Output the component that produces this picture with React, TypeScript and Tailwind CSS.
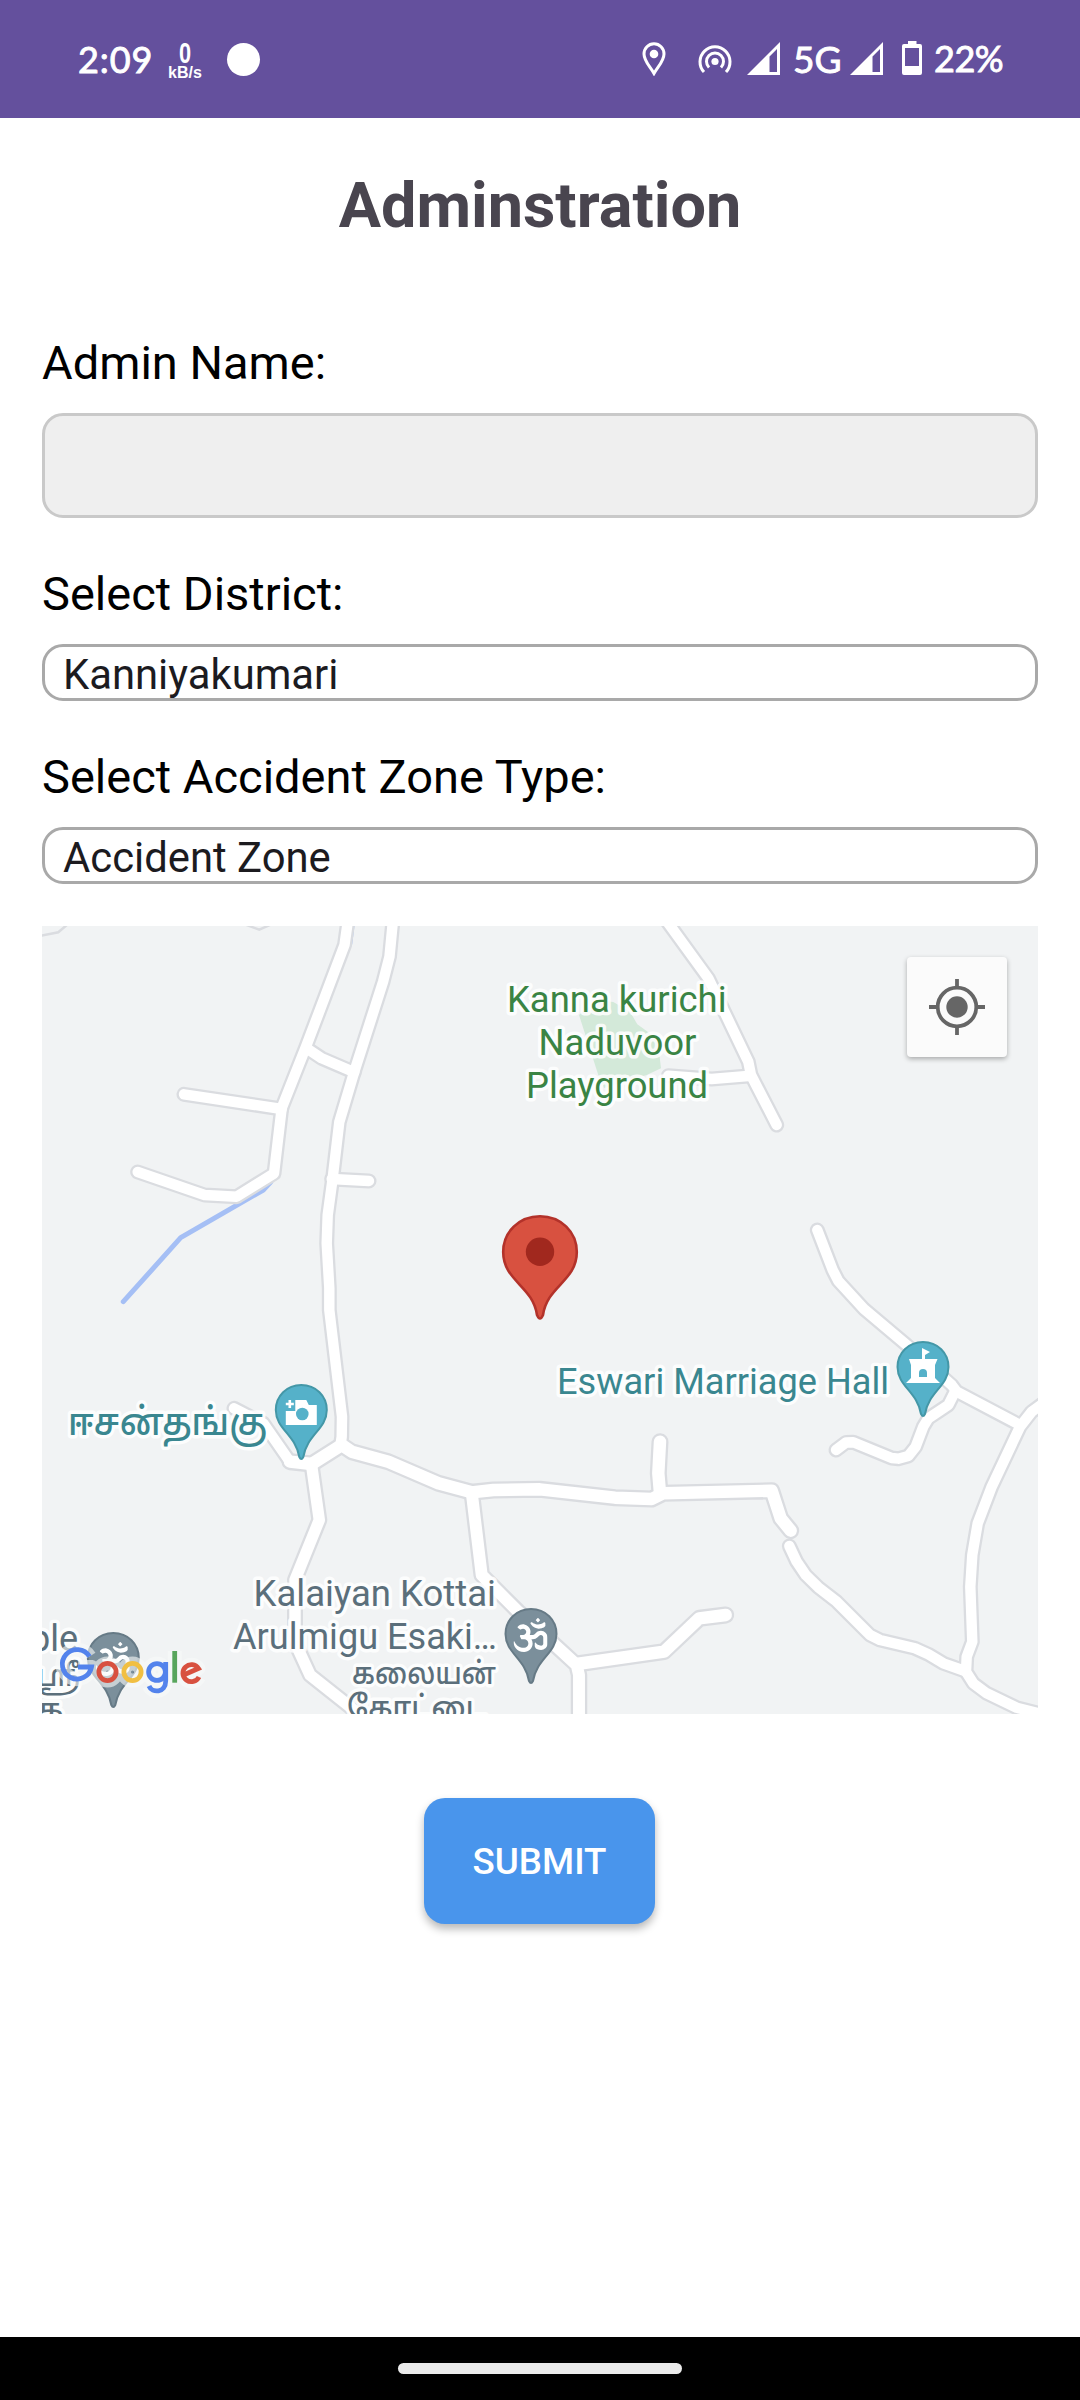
import React from "react";
import { FaOm } from "react-icons/fa";

type Road = { d: string; w?: number };

const roads: Road[] = [
  { d: "M348 920 L344.5 945 L306 1046.7 L281.7 1108 L274 1173.5 L236.7 1196.7 L204.5 1195 L137.7 1172" },
  { d: "M184 1094.3 L281.7 1109" },
  { d: "M393 920 L389.5 956.5 L383 982 L354.3 1071.7 L339.3 1122 L332.7 1178 L327.7 1215 L326.7 1243.3 L329.3 1288 L329.3 1310 L342 1416.7 L341.7 1436.7 L340.5 1445" },
  { d: "M306.7 1048.3 L321.7 1058.3 L354.3 1072.3" },
  { d: "M331.7 1179 L369 1181" },
  { d: "M666 920 L708.3 978.3 L748.3 1061.7 L751 1075 L776.7 1125" },
  { d: "M668.3 1075.7 L711.7 1079 L751 1075.7" },
  { d: "M817.3 1230 L832.7 1270 L838.3 1281 L864 1309 L906.7 1345 L951.7 1385 L956.7 1391.7 L1020 1425" },
  { d: "M1045 1402 L1031.7 1411.7 L1020 1426.7 L991.7 1486.7 L977.7 1523.3 L972.3 1555 L970.3 1586.7 L972.3 1641.7 L966.7 1656.7 L966 1671.7 L973.3 1683.3 L986.7 1693.3 L1016.7 1707.7 L1045 1715" },
  { d: "M789.3 1546 L796.7 1561.7 L805.7 1575 L818.3 1587.3 L836.7 1601.7 L870 1635 L880 1640 L915 1648.3 L928.3 1654.3 L943.3 1663.3 L965 1671" },
  { d: "M954.3 1393 L948.3 1405 L928.3 1418.3 L923.3 1426.7 L915.7 1446.7 L908.3 1456 L898.3 1458.7 L891.7 1458 L853.3 1442.3 L846 1442.5 L836 1450" },
  { d: "M234 1408.3 L263.3 1423.3 L290 1461.7" },
  { d: "M290 1461.7 L311.7 1464 L341.7 1445 L351.7 1451.7 L388.3 1461.7 L438.3 1483.3 L471.7 1492.3 L493.3 1490 L540 1489.3 L615 1497.7 L651.7 1499 L663.3 1493.3 L771.7 1490.7 L780.7 1518.3 L790.7 1530.7", w: 17 },
  { d: "M660 1441.7 L658.3 1473.3 L660 1493", w: 17 },
  { d: "M311.7 1466 L319.3 1520 L295 1580 L295 1630 L297 1646.7 L310 1675 L350 1706.7 L364 1720", w: 16 },
  { d: "M471.7 1492.3 L481.7 1575 L518.3 1611.7 L556.7 1646.7 L576.7 1665 L579 1675 L579 1720", w: 16.5 },
  { d: "M576.7 1664 L664 1651.7 L699.3 1618.3 L725.7 1615", w: 17 },
];

function PlacePin({ x, y, fill, edge, children }: { x: number; y: number; fill: string; edge: string; children?: React.ReactNode }) {
  return (
    <g transform={`translate(${x} ${y})`}>
      <path
        d="M0 1 C14.5 1 25.5 12 25.5 26 C25.5 45 5.500 51 2 73 Q0 77 -2 73 C-5.500 51 -25.500 45 -25.500 26 C-25.500 12 -14.500 1 0 1Z"
        fill={fill}
        stroke={edge}
        strokeWidth="2"
      />
      {children}
    </g>
  );
}

type LabelProps = { x: number; y: number; w?: number; size?: number; weight?: number; fill: string; children: string };

function Label({ x, y, w, size = 36, weight = 400, fill, children }: LabelProps) {
  return (
    <text
      x={x}
      y={y}
      textLength={w}
      lengthAdjust="spacingAndGlyphs"
      fontSize={size}
      fontWeight={weight}
      fill={fill}
      stroke="#ffffff"
      strokeOpacity="0.85"
      strokeWidth="7"
      strokeLinejoin="round"
      paintOrder="stroke"
    >
      {children}
    </text>
  );
}

function GoogleShapes() {
  return (
    <>
      <path className="stroke-[#5383ec]" d="M89.500 1656.500 A14.700 14.700 0 1 0 91.500 1667 H78" />
      <circle className="stroke-[#d85140]" cx="107.500" cy="1672" r="8.600" />
      <circle className="stroke-[#f1bf42]" cx="132.500" cy="1672" r="8.600" />
      <circle className="stroke-[#5383ec]" cx="157" cy="1672" r="8.400" />
      <path className="stroke-[#5383ec]" d="M165.700 1662 V1681 C165.700 1693 152 1693.500 149 1686" />
      <path className="stroke-[#58a55c]" d="M174.700 1651 V1682.700" />
      <path className="stroke-[#d85140]" d="M183.500 1675 L198.500 1668.500 A8.500 8.500 0 1 0 199 1677" />
    </>
  );
}

function MapCanvas() {
  const green = "#3a8444";
  const teal = "#3a8790";
  const slate = "#5b6f7b";
  return (
    <svg viewBox="42 926 996 788" className="block h-full w-full font-['Roboto','Noto_Sans_Tamil','Noto_Sans',sans-serif]">
      <rect x="42" y="926" width="996" height="788" fill="#f1f3f4" />
      <path d="M579 1015 L596 1000 L613.300 1002 L630 1011.700 L637.300 1024.300 L648.300 1032.300 L658 1043 L661 1068.300 L646.700 1075 L604 1088 L598.300 1075Z" fill="#d3e9d9" />
      <path d="M123.300 1301.700 L180.700 1237.700 L263.300 1190 L270.700 1182" fill="none" stroke="#a5bff5" strokeWidth="5" strokeLinejoin="round" strokeLinecap="round" />
      <path d="M354 920 L351 944 L347 953" fill="none" stroke="#a5bff5" strokeWidth="2.500" />
      <g fill="none" stroke="#dadce0" strokeWidth="2.500">
        <path d="M40 936 L58.300 932.300 L68 924" />
        <path d="M244 924 L259.300 929.700 L272 924" />
      </g>
      <g fill="none" stroke="#dadce0" strokeLinejoin="round" strokeLinecap="round">
        {roads.map((r) => (
          <path key={r.d} d={r.d} strokeWidth={r.w ?? 15} />
        ))}
      </g>
      <g fill="none" stroke="#ffffff" strokeLinejoin="round" strokeLinecap="round">
        {roads.map((r) => (
          <path key={r.d} d={r.d} strokeWidth={(r.w ?? 15) - 4.6} />
        ))}
      </g>

      <Label x={507} y={1011.700} w={219.500} fill={green}>Kanna kurichi</Label>
      <Label x={538.500} y={1054.700} w={158} fill={green}>Naduvoor</Label>
      <Label x={526} y={1097.700} w={182} fill={green}>Playground</Label>
      <Label x={557} y={1393.700} w={332} fill={teal}>Eswari Marriage Hall</Label>
      <Label x={68} y={1435} w={199} size={38} weight={500} fill={teal}>ஈசன்தங்கு</Label>
      <Label x={253.500} y={1606} w={242.500} fill={slate}>Kalaiyan Kottai</Label>
      <Label x={233} y={1649} w={264} fill={slate}>Arulmigu Esaki…</Label>
      <Label x={352} y={1683.500} w={144} size={31} weight={500} fill={slate}>கலையன்</Label>
      <Label x={347} y={1718} w={139} size={31} weight={500} fill={slate}>கோட்டை</Label>
      <Label x={30} y={1651} fill={slate}>ple</Label>
      <Label x={37} y={1686} w={43} size={31} weight={500} fill={slate}>ஸ்ரீ</Label>
      <Label x={37} y={1720} size={31} weight={500} fill={slate}>க</Label>

      <PlacePin x={301.300} y={1384} fill="#55b1c9" edge="#4497a7">
        <path d="M-15.500 27 H-6 V16 H5 L7.500 21 H15.500 V41 H-15.500Z" fill="#fff" />
        <path d="M-11.500 16 V24 M-15.500 20 H-7.500" stroke="#fff" strokeWidth="2.600" />
        <circle cx="1" cy="30" r="6.300" fill="#55b1c9" />
      </PlacePin>
      <PlacePin x={923} y={1341} fill="#55b1c9" edge="#4497a7">
        <path d="M-14 18 H-1 V7 L7 11 L2 14 V18 H14.500 L12 24 V37 L17 42 H-17 L-12 37 V24Z" fill="#fff" />
        <path d="M-4 36 V32 A4 4 0 0 1 4 32 V36Z" fill="#55b1c9" />
      </PlacePin>
      <PlacePin x={531} y={1608} fill="#7b8f9b" edge="#667a86">
        <FaOm x={-17.500} y={10} size={34} color="#fff" />
      </PlacePin>
      <PlacePin x={113.300} y={1632} fill="#7b8f9b" edge="#667a86">
        <FaOm x={-17.500} y={10} size={34} color="#fff" />
      </PlacePin>

      <path
        d="M540 1216.200 C561 1216.200 576.800 1232 576.800 1252 C576.800 1281 547 1286 543 1315 Q540 1322 537 1315 C533 1286 503.200 1281 503.200 1252 C503.200 1232 519 1216.200 540 1216.200Z"
        fill="#d85140"
        stroke="#b3322a"
        strokeWidth="2.600"
      />
      <circle cx="540" cy="1251.700" r="14.200" fill="#a1281e" />

      <g fill="none" strokeWidth="14" strokeLinejoin="round" opacity="0.600" className="[&>*]:stroke-[#f8faf9]">
        <GoogleShapes />
      </g>
      <g fill="none" strokeWidth="4.800">
        <GoogleShapes />
      </g>
    </svg>
  );
}

function SignalIcon() {
  return (
    <svg viewBox="0 0 33 33" className="h-[33px] w-[33px]" fill="#fff">
      <path fillRule="evenodd" d="M0 33 L33 0 V33Z M22.500 14.500 V30 H30 V7Z" />
    </svg>
  );
}

function StatusBar() {
  return (
    <header className="flex h-[118px] items-start bg-[#64509d] font-['Lato',sans-serif] text-white">
      <span className="ml-[78px] mt-[37px] w-[76px] whitespace-nowrap text-[36px] leading-[44px] tracking-[0.900px] [-webkit-text-stroke:0.9px_white]">2:09</span>
      <div className="ml-[12px] mt-[41px] flex w-[38px] flex-col items-center font-['Liberation_Sans',sans-serif] font-bold">
        <span className="scale-x-75 text-[29px] leading-[25px]">0</span>
        <span className="text-[16px] leading-[14px]">kB/s</span>
      </div>
      <span className="ml-[22.500px] mt-[43px] h-[33px] w-[33px] rounded-full bg-white" />

      <svg viewBox="0 0 24 34" className="ml-[382px] mt-[42px] h-[34px] w-[24px]" fill="none" stroke="#fff" strokeWidth="3">
        <path d="M12 31.500 C8 24.500 2 19 2 12 A10 10.300 0 0 1 22 12 C22 19 16 24.500 12 31.500Z" />
        <circle cx="12" cy="12" r="4.300" fill="#fff" stroke="none" />
      </svg>
      <svg viewBox="0 0 34 34" className="ml-[32px] mt-[43.500px] h-[34px] w-[34px]" fill="none" stroke="#fff" strokeWidth="3">
        <path d="M6 28 A15 15 0 1 1 28 28" />
        <path d="M11 23.500 A8.500 8.500 0 1 1 23 23.500" />
        <circle cx="17" cy="17.500" r="3.600" fill="#fff" stroke="none" />
      </svg>
      <span className="ml-[15px] mt-[42px]"><SignalIcon /></span>
      <span className="ml-[13.500px] mt-[37px] w-[50px] whitespace-nowrap text-[37px] leading-[44px] [-webkit-text-stroke:0.9px_white]">5G</span>
      <span className="ml-[7px] mt-[42px]"><SignalIcon /></span>
      <svg viewBox="0 0 20 34" className="ml-[19px] mt-[41px] h-[34px] w-[20px]" fill="#fff">
        <path fillRule="evenodd" d="M6 0 H14.500 V3 H18 Q20 3 20 5 V32 Q20 34 18 34 H2 Q0 34 0 32 V5 Q0 3 2 3 H6Z M3 7 V25 H17 V7Z" />
      </svg>
      <span className="ml-[12px] mt-[36px] whitespace-nowrap text-[36px] leading-[44px] tracking-[-0.500px] [-webkit-text-stroke:0.9px_white]">22%</span>
    </header>
  );
}

function FieldLabel({ children }: { children: string }) {
  return <label className="block whitespace-nowrap text-[47px] leading-[56px] text-black">{children}</label>;
}

function SelectField({ value }: { value: string }) {
  return (
    <div className="mt-[22px] h-[57px] rounded-[21px] border-3 border-[#a9a9a9] px-[18px] pt-[3px] text-[41.800px] leading-[49px] text-[#1c1b1f]">
      {value}
    </div>
  );
}

export default function App() {
  return (
    <div className="flex h-[2400px] w-[1080px] flex-col overflow-hidden bg-white font-['Roboto',sans-serif]">
      <StatusBar />
      <main className="flex flex-1 flex-col px-[42px] pt-[51px]">
        <h1 className="text-center text-[63px] font-bold leading-[74px] text-[#49454f]">Adminstration</h1>
        <section className="mt-[92px]">
          <FieldLabel>Admin Name:</FieldLabel>
          <div className="mt-[22px] h-[105px] rounded-[21px] border-3 border-[#c9c9c9] bg-[#efefef]" />
        </section>
        <section className="mt-[48px]">
          <FieldLabel>Select District:</FieldLabel>
          <SelectField value="Kanniyakumari" />
        </section>
        <section className="mt-[48px]">
          <FieldLabel>Select Accident Zone Type:</FieldLabel>
          <SelectField value="Accident Zone" />
        </section>
        <section className="relative mt-[42px] h-[788px] overflow-hidden">
          <MapCanvas />
          <button className="absolute right-[31px] top-[31px] flex h-[100px] w-[100px] items-center justify-center rounded-[4px] bg-[#fbfbfb] shadow-[0_2px_5px_rgba(0,0,0,0.3)]">
            <svg viewBox="-28 -28 56 56" className="h-[56px] w-[56px]" fill="none" stroke="#666" strokeWidth="3.800">
              <circle r="19.300" />
              <circle r="10.700" fill="#666" stroke="none" />
              <path d="M0 -28 V-19 M0 28 V19 M-28 0 H-19 M28 0 H19" />
            </svg>
          </button>
        </section>
        <button className="ml-[382px] mt-[84px] h-[126px] w-[231px] rounded-[21px] bg-[#4995ec] pt-[2px] text-[36.750px] font-medium text-white shadow-[0_5px_9px_rgba(0,0,0,0.28)]">
          SUBMIT
        </button>
      </main>
      <footer className="flex h-[63px] justify-center bg-black pt-[26px]">
        <span className="h-[11px] w-[284px] rounded-full bg-[#ebebeb]" />
      </footer>
    </div>
  );
}
